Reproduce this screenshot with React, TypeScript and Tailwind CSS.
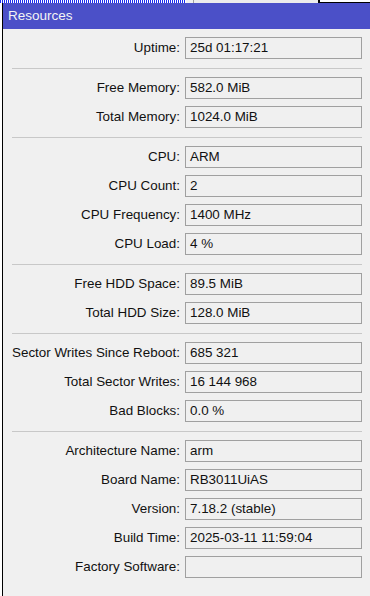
import React from 'react'

type Row = { label: string; value: string }

const groups: Row[][] = [
  [{ label: 'Uptime:', value: '25d 01:17:21' }],
  [
    { label: 'Free Memory:', value: '582.0 MiB' },
    { label: 'Total Memory:', value: '1024.0 MiB' },
  ],
  [
    { label: 'CPU:', value: 'ARM' },
    { label: 'CPU Count:', value: '2' },
    { label: 'CPU Frequency:', value: '1400 MHz' },
    { label: 'CPU Load:', value: '4 %' },
  ],
  [
    { label: 'Free HDD Space:', value: '89.5 MiB' },
    { label: 'Total HDD Size:', value: '128.0 MiB' },
  ],
  [
    { label: 'Sector Writes Since Reboot:', value: '685 321' },
    { label: 'Total Sector Writes:', value: '16 144 968' },
    { label: 'Bad Blocks:', value: '0.0 %' },
  ],
  [
    { label: 'Architecture Name:', value: 'arm' },
    { label: 'Board Name:', value: 'RB3011UiAS' },
    { label: 'Version:', value: '7.18.2 (stable)' },
    { label: 'Build Time:', value: '2025-03-11 11:59:04' },
    { label: 'Factory Software:', value: '' },
  ],
]

function Field({ label, value }: Row) {
  return (
    <div className="flex items-center h-[22px]">
      <div className="w-[182px] pr-[5px] text-right whitespace-nowrap">{label}</div>
      <div className="w-[177px] h-[22px] border border-[#a0a0a0] px-[4px] flex items-center whitespace-nowrap">
        {value}
      </div>
    </div>
  )
}

export default function App() {
  return (
    <div
      className="w-[370px] h-[596px] overflow-hidden bg-[#f0f0f0] text-[13.4px] text-[#111] flex flex-col"
      style={{ fontFamily: '"Liberation Sans", Arial, sans-serif' }}
    >
      {/* strip of the window behind */}
      <div className="h-[3px] flex shrink-0">
        <div className="w-[186px] bg-[repeating-linear-gradient(90deg,#1a2cf0_0px,#1a2cf0_1px,#ffffff_1px,#ffffff_2px)]" />
        <div className="w-[7px] bg-[#f0f0f0]" />
        <div className="w-[1px] bg-[#a0a0a0]" />
        <div className="w-[124px] bg-[#ececec]" />
        <div className="w-[2px] bg-black" />
        <div className="flex-1 bg-white border-b border-black" />
      </div>

      <div className="flex flex-1 min-h-0">
        <div className="w-[2px] bg-white shrink-0" />
        <div className="w-[1px] bg-black shrink-0" />
        <div className="flex-1 flex flex-col min-w-0">
          <div className="h-[26px] bg-[#4b50c8] text-[#f4f4f4] text-[13.5px] flex items-center pl-[5px] shrink-0">
            Resources
          </div>
          <div className="pt-[8px] flex flex-col">
            {groups.map((g, gi) => (
              <div key={gi} className="flex flex-col">
                {gi > 0 && (
                  <div className="pt-[9px] pb-[8px] pl-[9px] pr-[8px]">
                    <div className="h-[1px] bg-[#c8c8c8]" />
                  </div>
                )}
                <div className="flex flex-col gap-[7px]">
                  {g.map(r => (
                    <Field key={r.label} {...r} />
                  ))}
                </div>
              </div>
            ))}
          </div>
        </div>
      </div>
    </div>
  )
}
